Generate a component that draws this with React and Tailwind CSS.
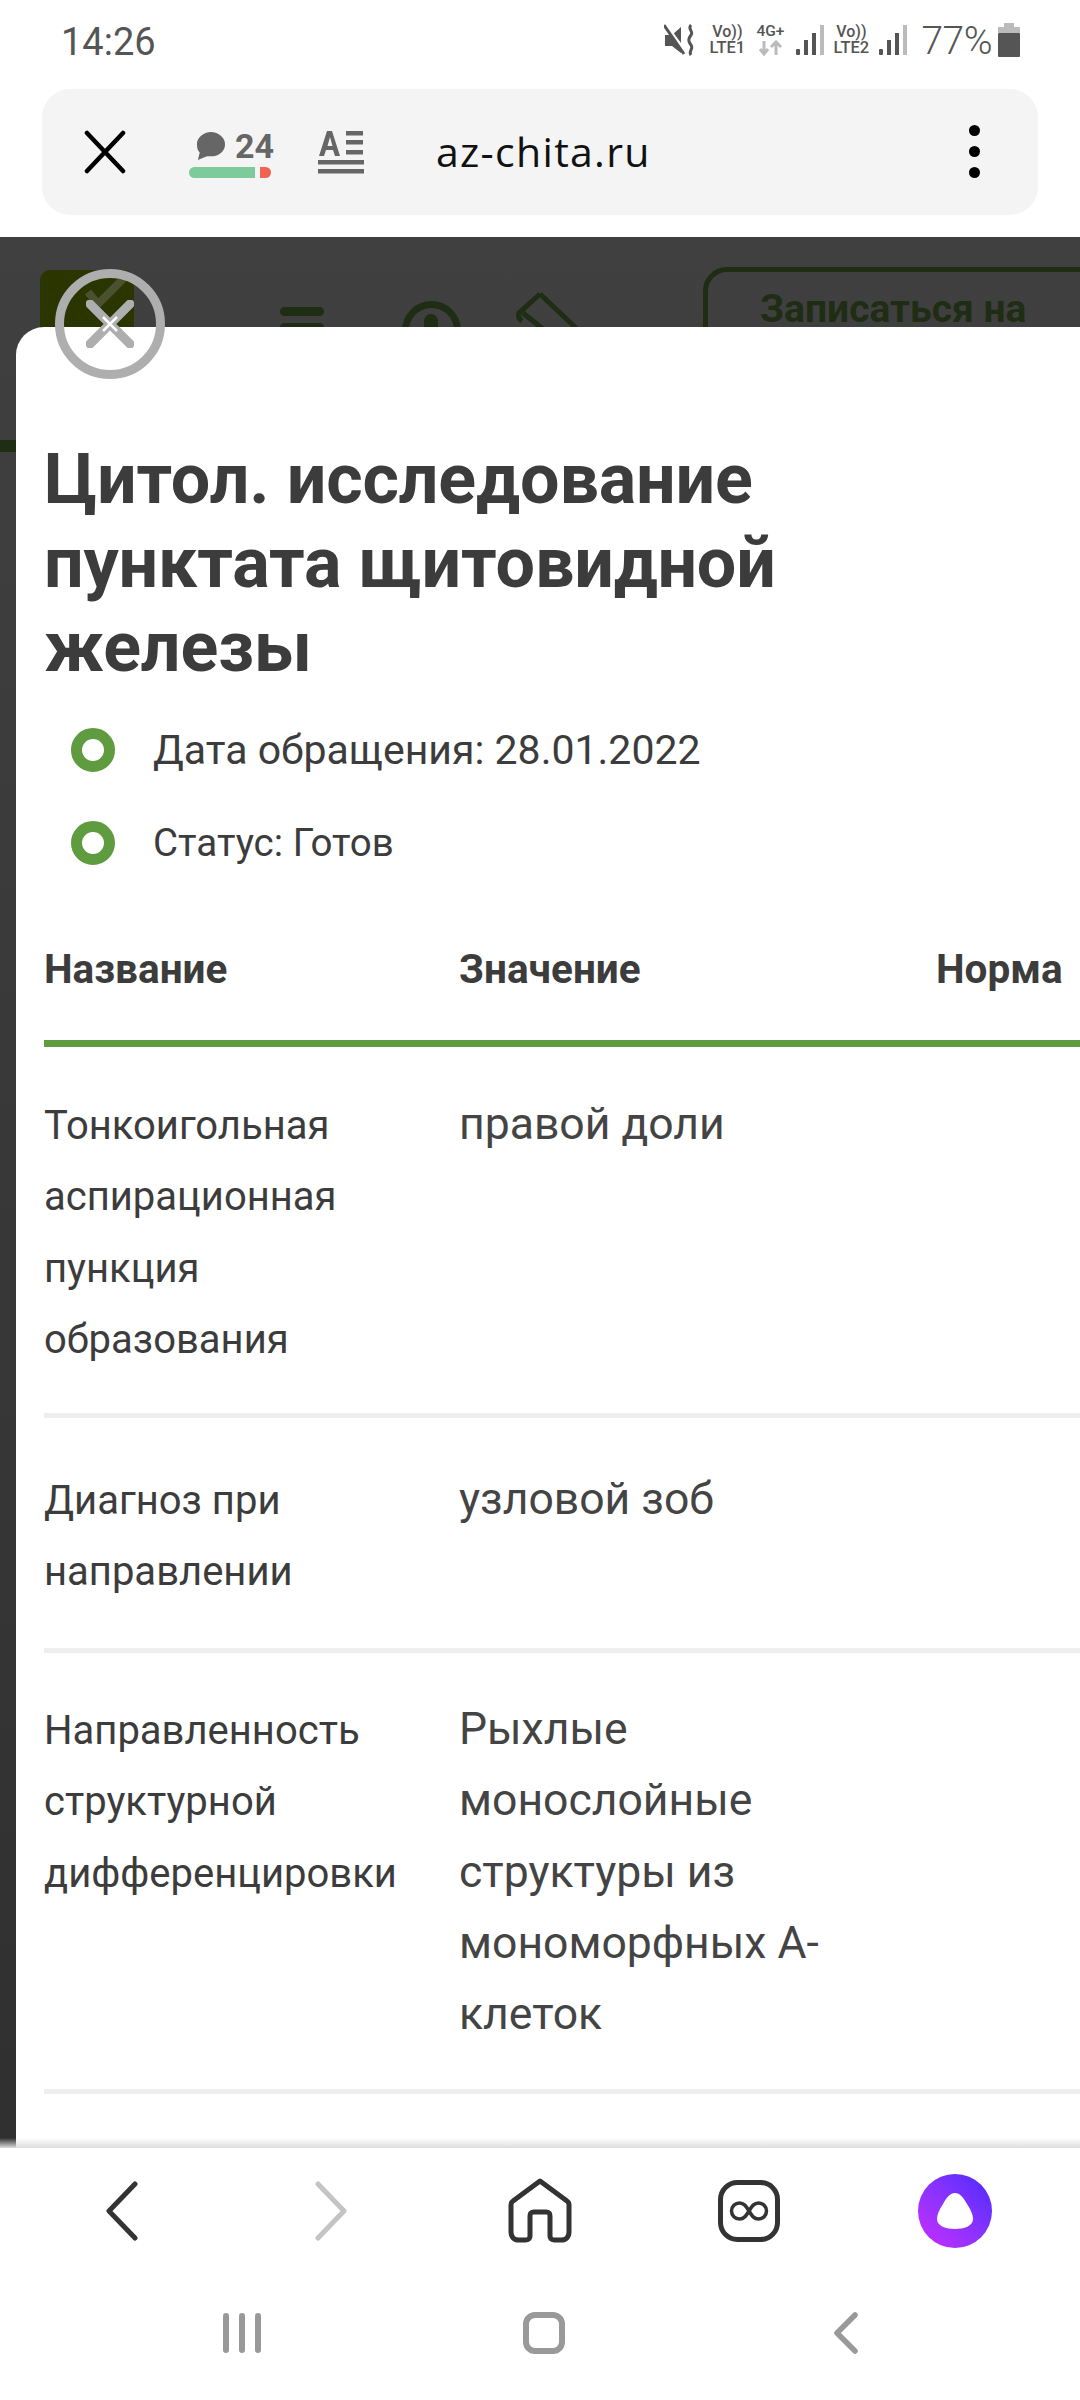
const rows = [
  { name: 'Тонкоигольная аспирационная пункция образования', value: 'правой доли', cls: 'h-[371px] pt-[43px]' },
  { name: 'Диагноз при направлении', value: 'узловой зоб', cls: 'h-[235px] pt-[47px]' },
  { name: 'Направленность структурной дифференцировки', value: 'Рыхлые монослойные структуры из мономорфных А-клеток', cls: 'h-[441px] pt-[42px]' },
];

function Signal() {
  return (
    <svg width="28" height="32" viewBox="0 0 28 32">
      <rect x="0" y="25" width="4" height="6" rx="1" fill="#555" />
      <rect x="8" y="16" width="4" height="15" fill="#555" />
      <rect x="16" y="9" width="4" height="22" fill="#555" />
      <rect x="24" y="1" width="4" height="30" fill="#bbb" />
    </svg>
  );
}

function VoLte({ label, width }) {
  return (
    <div className={`flex flex-col items-center font-['Roboto',sans-serif] font-medium text-[#555] ${width}`}>
      <span className="text-[16px] leading-[16px]">Vo))</span>
      <span className="text-[16.5px] leading-[16px] whitespace-nowrap">{label}</span>
    </div>
  );
}

function StatusBar() {
  return (
    <div className="h-[89px] flex justify-between pl-[61px] pr-[60px] pt-[20px] font-['Roboto',sans-serif] text-[#555]">
      <span className="text-[38px] leading-[44px]">14:26</span>
      <div className="flex items-start h-[40px] pt-[4px]">
        <svg width="32" height="32" viewBox="0 0 32 32" className="mr-[11px]">
          <path d="M1 11h7l9-8v26l-9-7H1z" fill="#555" />
          <path d="M2 2l19 26" stroke="#fff" strokeWidth="4" />
          <path d="M0 1l20 29" stroke="#555" strokeWidth="3" />
          <path d="M27 1c-4 4 3 6 0 10s-3 6 0 10-3 6 0 10" fill="none" stroke="#555" strokeWidth="3" />
        </svg>
        <VoLte label="LTE1" width="w-[40px]" />
        <div className="w-[32px] ml-[7px] flex flex-col items-center font-medium text-[#555]">
          <span className="text-[15.5px] leading-[15px]">4G+</span>
          <svg width="24" height="16" viewBox="0 0 24 16" className="mt-[1px]">
            <path d="M6 1v12M2 9l4 5 4-5" fill="none" stroke="#bbb" strokeWidth="3" />
            <path d="M18 15V3M13 7l5-5 5 5" fill="none" stroke="#bbb" strokeWidth="3" />
          </svg>
        </div>
        <div className="ml-[10px] mr-[6px]"><Signal /></div>
        <VoLte label="LTE2" width="w-[42px]" />
        <div className="ml-[7px] mr-[14px]"><Signal /></div>
        <span className="text-[39px] leading-[34px] font-light tracking-[-0.5px]">77%</span>
        <svg width="22" height="34" viewBox="0 0 22 34" className="ml-[6px] -mt-[1px]">
          <rect x="6" y="0" width="10" height="4" fill="#bbb" />
          <rect x="0" y="4" width="22" height="6" fill="#bbb" />
          <rect x="0" y="10" width="22" height="24" rx="1" fill="#555" />
        </svg>
      </div>
    </div>
  );
}

function AddressBar() {
  return (
    <div className="mx-[42px] w-[996px] h-[126px] bg-[#f4f4f4] rounded-[28px] flex items-center relative">
      <svg width="44" height="44" viewBox="0 0 44 44" className="ml-[41px]">
        <path d="M4 3l36 38M40 3L4 41" stroke="#000" strokeWidth="4.5" strokeLinecap="round" />
      </svg>
      <div className="ml-[63px] w-[84px] flex flex-col">
        <div className="flex items-center h-[38px] ml-[6px]">
          <svg width="32" height="32" viewBox="0 0 32 32">
            <path d="M16 1c8 0 15 6 15 13s-6 13-15 13c-3 0-5 0-7 1l-7 3 2-8C2 21 1 18 1 14 1 7 8 1 16 1z" fill="#666" />
          </svg>
          <span className="ml-[9px] font-['Roboto',sans-serif] font-bold text-[34px] leading-[36px] text-[#666]">24</span>
        </div>
        <div className="flex mt-[2px] -ml-[1px]">
          <div className="w-[66px] h-[11px] bg-[#7dcb9b] rounded-l-full" />
          <div className="w-[11px] h-[11px] ml-[5px] bg-[#ef6350] rounded-r-full" />
        </div>
      </div>
      <svg width="46" height="44" viewBox="0 0 46 44" className="ml-[44px]">
        <path d="M1 26L9 1h5l8 25h-5l-2-6H8l-2 6zM9.500 16h5L12 7z" fill="#666" fillRule="evenodd" />
        <rect x="28" y="1" width="17" height="4.500" fill="#666" />
        <rect x="28" y="10" width="17" height="4.500" fill="#666" />
        <rect x="28" y="20" width="17" height="4.500" fill="#666" />
        <rect x="0" y="30" width="46" height="4.500" fill="#666" />
        <rect x="0" y="39" width="46" height="4.500" fill="#666" />
      </svg>
      <span className="ml-[72px] -mt-[2px] font-['Open_Sans',sans-serif] text-[41px] leading-[50px] tracking-[1.3px] text-[#111]">az-chita.ru</span>
      <div className="absolute left-[927px] top-[36px] flex flex-col gap-[10px]">
        <div className="w-[11px] h-[11px] rounded-full bg-black" />
        <div className="w-[11px] h-[11px] rounded-full bg-black" />
        <div className="w-[11px] h-[11px] rounded-full bg-black" />
      </div>
    </div>
  );
}

// dimmed site header behind the sheet
function SiteBehind() {
  return (
    <div className="absolute inset-0 overflow-hidden bg-gradient-to-b from-[#404040] to-[#303030]">
      <div className="absolute left-[40px] top-[33px] w-[94px] h-[94px] bg-[#2b3500] rounded-[10px]">
        <svg width="94" height="94" viewBox="0 0 94 94">
          <path d="M48 22l10 12 26-26" fill="none" stroke="#4a5030" strokeWidth="8" />
        </svg>
      </div>
      <div className="absolute left-[280px] top-[70px] w-[44px] h-[9px] rounded-full bg-[#1f2d14]" />
      <div className="absolute left-[280px] top-[86px] w-[44px] h-[9px] rounded-full bg-[#1f2d14]" />
      <div className="absolute left-[402px] top-[64px] w-[59px] h-[59px] rounded-full border-[7px] border-[#1f2d14]" />
      <div className="absolute left-[424px] top-[77px] w-[14px] h-[28px] rounded-full bg-[#1f2d14]" />
      <svg width="70" height="50" viewBox="0 0 70 50" className="absolute left-[515px] top-[54px]">
        <path d="M25 3L4 22c-1 3 0 6 3 8M25 3l36 34M8 22l30 24" fill="none" stroke="#1f2d14" strokeWidth="5" />
      </svg>
      <div className="absolute left-[703px] top-[30px] w-[420px] h-[120px] rounded-[24px] border-[5px] border-[#1f2d14] pt-[13px] pl-[52px] font-['Roboto',sans-serif] font-bold text-[39px] leading-[48px] text-[#1f2d14]">
        Записаться на
      </div>
      <div className="absolute left-0 top-[203px] w-[16px] h-[12px] bg-[#1f2d14]" />
    </div>
  );
}

function InfoLine({ children, textSize }) {
  return (
    <div className="flex items-center h-[93px]">
      <div className="ml-[27px] w-[44px] h-[44px] rounded-full border-[11px] border-[#5f9b3f]" />
      <span className={`ml-[38px] leading-[50px] whitespace-nowrap ${textSize}`}>{children}</span>
    </div>
  );
}

function Sheet() {
  return (
    <div className="relative ml-[16px] h-[1821px] bg-white rounded-tl-[28px] overflow-hidden pl-[28px] text-[#3c3c3c] font-['Roboto',sans-serif]">
      <h1 className="pt-[110px] text-[70px] leading-[84px] font-bold tracking-[-0.15px] w-[800px]">
        Цитол. исследование пунктата щитовидной железы
      </h1>
      <div className="mt-[14px]">
        <InfoLine textSize="text-[41px]">Дата обращения: 28.01.2022</InfoLine>
        <InfoLine textSize="text-[38.5px]">Статус: Готов</InfoLine>
      </div>
      <div className="mt-[55px] grid grid-cols-[415px_477px_1fr] h-[103px] border-b-[7px] border-[#5f9b3f] font-bold text-[40.5px] leading-[50px] whitespace-nowrap">
        <div>Название</div>
        <div>Значение</div>
        <div>Норма</div>
      </div>
      {rows.map((row) => (
        <div key={row.name} className={`grid grid-cols-[415px_477px_1fr] border-b-[5px] border-[#eeeeee] text-[40px] leading-[71.3px] ${row.cls}`}>
          <div className="pr-[20px]">{row.name}</div>
          <div className="pr-[70px] -mt-[1px] text-[44.5px] text-[#444444]">{row.value}</div>
          <div />
        </div>
      ))}
    </div>
  );
}

function BottomNav() {
  return (
    <div className="absolute left-0 right-0 top-[2148px] h-[252px] bg-white">
      <div className="absolute left-0 right-0 -top-[10px] h-[10px] bg-gradient-to-b from-transparent to-[#dddddd]" />
      <div className="grid grid-cols-5 px-[18px] h-[126px] items-center">
        <svg width="32" height="60" viewBox="0 0 32 60" className="justify-self-center">
          <path d="M29 3L3 30l26 27" fill="none" stroke="#333" strokeWidth="5" strokeLinecap="round" strokeLinejoin="round" />
        </svg>
        <svg width="32" height="60" viewBox="0 0 32 60" className="justify-self-center">
          <path d="M3 3l26 27L3 57" fill="none" stroke="#c4c4c4" strokeWidth="5" strokeLinecap="round" strokeLinejoin="round" />
        </svg>
        <svg width="66" height="66" viewBox="0 0 66 66" className="justify-self-center">
          <path d="M33 3L6 23c-1.500 1-2 2-2 4v27c0 5 3 8 8 8h7c3 0 4-2 4-4V38c0-3 1-4 4-4h12c3 0 4 1 4 4v20c0 2 1 4 4 4h7c5 0 8-3 8-8V27c0-2-.5-3-2-4z" fill="none" stroke="#333" strokeWidth="5" strokeLinejoin="round" />
        </svg>
        <svg width="62" height="62" viewBox="0 0 62 62" className="justify-self-center">
          <rect x="2.500" y="2.500" width="57" height="57" rx="17" fill="none" stroke="#333" strokeWidth="5" />
          <path d="M31 31c-3-5-5-8-9.500-8a8 8 0 000 16c4.500 0 6.500-3 9.500-8s5-8 9.500-8a8 8 0 010 16c-4.500 0-6.500-3-9.500-8z" fill="none" stroke="#333" strokeWidth="3.500" />
        </svg>
        <div className="justify-self-center -translate-x-[3px] w-[74px] h-[74px] rounded-full bg-gradient-to-tr from-[#c926ff] to-[#4a26ff] flex items-center justify-center">
          <svg width="38" height="38" viewBox="0 0 38 38">
            <path d="M19 1c5 0 8 4 12 11 4 6 6 11 6 15 0 7-9 10-18 10S1 34 1 27c0-4 2-9 6-15C11 5 14 1 19 1z" fill="#fff" />
          </svg>
        </div>
      </div>
      <div className="grid grid-cols-3 pl-[91px] pr-[83px] mt-[38px] items-center">
        <div className="justify-self-center flex gap-[10px]">
          <div className="w-[6px] h-[40px] rounded-full bg-[#999]" />
          <div className="w-[6px] h-[40px] rounded-full bg-[#999]" />
          <div className="w-[6px] h-[40px] rounded-full bg-[#999]" />
        </div>
        <div className="justify-self-center w-[42px] h-[42px] rounded-[12px] border-[6px] border-[#999]" />
        <svg width="24" height="42" viewBox="0 0 24 42" className="justify-self-center">
          <path d="M21 3L3 21l18 18" fill="none" stroke="#999" strokeWidth="5.500" strokeLinecap="round" strokeLinejoin="round" />
        </svg>
      </div>
    </div>
  );
}

export default function App() {
  return (
    <div className="relative w-[1080px] h-[2400px] bg-white overflow-hidden">
      <StatusBar />
      <AddressBar />
      <div className="relative mt-[22px] pt-[90px] h-[1911px]">
        <SiteBehind />
        <Sheet />
        {/* close button sits on the sheet corner */}
        <div className="absolute left-[55px] top-[32px] w-[110px] h-[110px] rounded-full border-[9px] border-[#aeaeae] flex items-center justify-center">
          <svg width="48" height="48" viewBox="0 0 48 48">
            <path d="M4 4l40 40M44 4L4 44" stroke="#aeaeae" strokeWidth="9" strokeLinecap="round" />
            <path d="M17 17l14 14M31 17L17 31" stroke="#fff" strokeWidth="2.500" />
          </svg>
        </div>
      </div>
      <BottomNav />
    </div>
  );
}
